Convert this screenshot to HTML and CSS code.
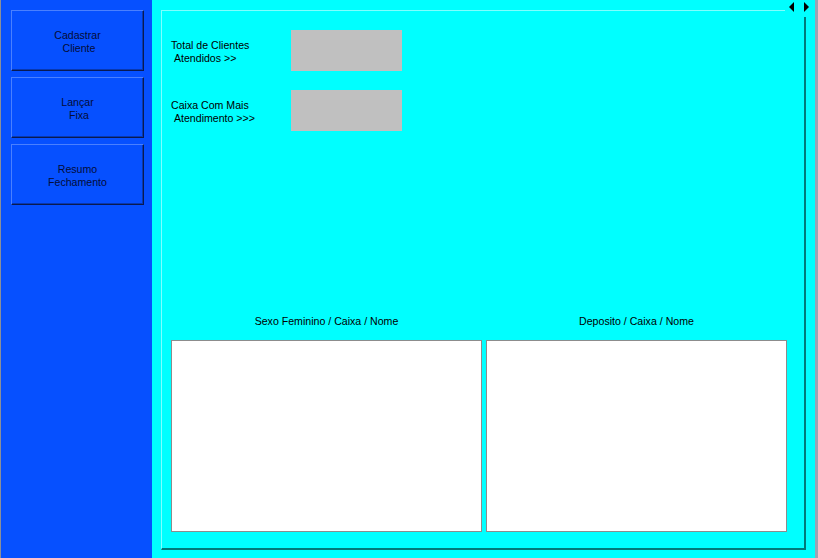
FILE: index.html
```html
<!DOCTYPE html>
<html>
<head>
<meta charset="utf-8">
<link rel="stylesheet" href="styles.css">
</head>
<body>
<div class="app">
  <aside class="sidebar">
    <button class="btn">Cadastrar<br>&nbsp;Cliente</button>
    <button class="btn">Lançar<br>&nbsp;Fixa</button>
    <button class="btn">Resumo<br>Fechamento</button>
  </aside>
  <main class="main">
    <div class="arrows">
      <svg width="6" height="10" viewBox="0 0 6 10"><polygon points="5,0 5,10 0,5" fill="#000"/></svg>
      <svg width="6" height="10" viewBox="0 0 6 10"><polygon points="0,0 0,10 5,5" fill="#000"/></svg>
    </div>
    <div class="frame">
      <div class="stat">
        <div class="stat-label">Total de Clientes<br>&nbsp;Atendidos &gt;&gt;</div>
        <div class="stat-box"></div>
      </div>
      <div class="stat">
        <div class="stat-label">Caixa Com Mais<br>&nbsp;Atendimento &gt;&gt;&gt;</div>
        <div class="stat-box"></div>
      </div>
      <div class="lists">
        <div class="list-col list-left">
          <div class="list-title">Sexo Feminino / Caixa / Nome</div>
          <div class="listbox"></div>
        </div>
        <div class="list-col list-right">
          <div class="list-title">Deposito / Caixa / Nome</div>
          <div class="listbox"></div>
        </div>
      </div>
    </div>
  </main>
</div>
</body>
</html>
```
FILE: styles.css
```css
* { box-sizing: border-box; }
html, body {
  margin: 0;
  padding: 0;
  width: 818px;
  height: 558px;
  overflow: hidden;
  font-family: "Liberation Sans", Arial, sans-serif;
  font-size: 10.6px;
  color: #000;
}
.app {
  display: flex;
  width: 818px;
  height: 558px;
  border-right: 3px solid #9aa4b4;
}
.sidebar {
  width: 152px;
  flex: none;
  background: #0650ff;
  border-left: 1px solid #8a8f9a;
  padding: 10px 0 0 10px;
  display: flex;
  flex-direction: column;
  gap: 6px;
}
.btn {
  width: 133px;
  height: 61px;
  background: #0650ff;
  color: #040c38;
  font-family: "Liberation Sans", Arial, sans-serif;
  font-size: 10.6px;
  line-height: 13px;
  text-align: center;
  padding: 2px 0 0 0;
  border-top: 1px solid #4a80ff;
  border-left: 1px solid #4a80ff;
  border-right: 1px solid #0a1a50;
  border-bottom: 1px solid #0a1a50;
  box-shadow: inset -1px -1px 0 #0838b0;
}
.main {
  flex: 1;
  background: #00ffff;
  position: relative;
  padding: 10px 9px 8px 9px;
  display: flex;
}
.arrows {
  position: absolute;
  z-index: 1;
  top: 0;
  right: 5px;
  height: 17px;
  padding: 2px 0 0 4px;
  display: flex;
  align-items: flex-start;
  gap: 9px;
  background: #00ffff;
}
.frame {
  flex: 1;
  border-top: 1px solid #7fffff;
  border-left: 1px solid #7fffff;
  border-right: 2px solid #007a7a;
  border-bottom: 2px solid #007a7a;
  padding: 20px 0 16px 9px;
  display: flex;
  flex-direction: column;
  gap: 19px;
}
.stat {
  display: flex;
  align-items: center;
  margin-top: -1px;
}
.stat + .stat { margin-top: 0; }
.stat-label {
  width: 120px;
  line-height: 13px;
  padding-top: 2px;
}
.stat-box {
  width: 111px;
  height: 41px;
  background: #c0c0c0;
}
.lists {
  margin-top: auto;
  display: flex;
  gap: 4px;
}
.list-col {
  display: flex;
  flex-direction: column;
  align-items: center;
  gap: 12px;
}
.list-left { width: 311px; }
.list-right { width: 301px; }
.list-title {
  line-height: 13px;
  padding-top: 1px;
}
.listbox {
  width: 100%;
  height: 192px;
  background: #fff;
  border: 1px solid #8c8c8c;
}
```
